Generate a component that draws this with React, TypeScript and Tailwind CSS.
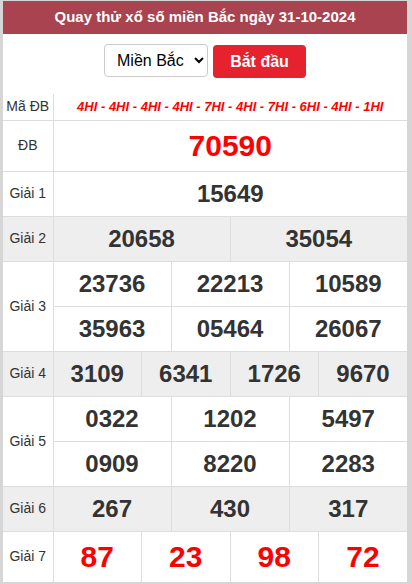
const maDB = ['4HI', '4HI', '4HI', '4HI', '7HI', '4HI', '7HI', '6HI', '4HI', '1HI'];

type Row = {
  label: string;
  rows: string[][];
  gray?: boolean;
  red?: boolean;
  tall?: boolean;
};

const prizes: Row[] = [
  { label: 'ĐB', rows: [['70590']], red: true, tall: true },
  { label: 'Giải 1', rows: [['15649']] },
  { label: 'Giải 2', rows: [['20658', '35054']], gray: true },
  { label: 'Giải 3', rows: [['23736', '22213', '10589'], ['35963', '05464', '26067']] },
  { label: 'Giải 4', rows: [['3109', '6341', '1726', '9670']], gray: true },
  { label: 'Giải 5', rows: [['0322', '1202', '5497'], ['0909', '8220', '2283']] },
  { label: 'Giải 6', rows: [['267', '430', '317']], gray: true },
  { label: 'Giải 7', rows: [['87', '23', '98', '72']], red: true, tall: true },
];

const span = (n: number) => 12 / n;

export default function App() {
  return (
    <div className="w-[412px] h-[584px] bg-white border-l-[3px] border-r-[5px] border-t border-b-2 border-[#d6d6d6] font-['Liberation_Sans',Arial,sans-serif] text-[#333]">
      {/* title */}
      <div className="h-[33px] bg-[#a9434f] flex items-center justify-center">
        <h1 className="text-white font-bold text-[15px]">Quay thử xổ số miền Bắc ngày 31-10-2024</h1>
      </div>

      {/* controls */}
      <div className="h-[60px] pt-[10px] flex items-start justify-center gap-[5px]">
        <select
          defaultValue="mb"
          className="w-[104px] h-[33px] pl-[8px] pr-1 text-[16px] text-black border border-[#ccc] rounded-[4px] bg-white"
        >
          <option value="mb">Miền Bắc</option>
          <option value="mt">Miền Trung</option>
          <option value="mn">Miền Nam</option>
        </select>
        <button className="mt-[1px] w-[93px] h-[33px] bg-[#e5222d] text-white font-bold text-[16px] rounded-[4px]">
          Bắt đầu
        </button>
      </div>

      <table className="w-full table-fixed border-collapse">
        <colgroup>
          <col className="w-[50px]" />
          {Array.from({ length: 12 }).map((_, i) => (
            <col key={i} />
          ))}
        </colgroup>
        <tbody>
          <tr>
            <td className="h-[26px] text-center text-[14px] text-[#333] p-0">Mã ĐB</td>
            <td colSpan={12} className="border-l border-[#ddd] text-center text-[13px] font-bold italic text-[#f00] p-0">
              {maDB.join(' - ')}
            </td>
          </tr>
          {prizes.map((p) =>
            p.rows.map((r, ri) => (
              <tr key={p.label + ri} className={p.gray ? 'bg-[#eee]' : ''}>
                {ri === 0 && (
                  <td
                    rowSpan={p.rows.length}
                    className="border-t border-[#ddd] text-center text-[14px] text-[#333] p-0"
                  >
                    {p.label}
                  </td>
                )}
                {r.map((num, ci) => (
                  <td
                    key={ci}
                    colSpan={span(r.length)}
                    className={`border-t border-l border-[#ddd] text-center font-bold p-0 ${
                      p.tall ? 'h-[51px] text-[30px]' : 'h-[45px] text-[24px]'
                    } ${p.red ? 'text-[#f00]' : 'text-[#333]'}`}
                  >
                    {num}
                  </td>
                ))}
              </tr>
            ))
          )}
        </tbody>
      </table>
    </div>
  );
}
